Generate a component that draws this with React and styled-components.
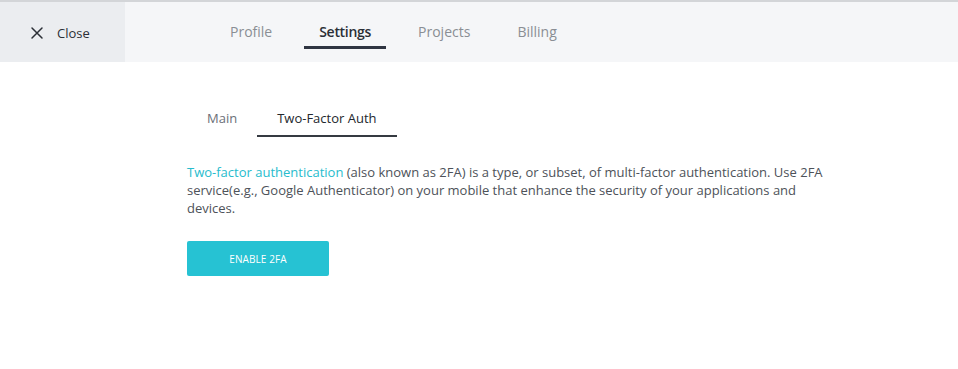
import React from 'react';
import styled, { createGlobalStyle } from 'styled-components';

const GlobalStyle = createGlobalStyle`
  body {
    margin: 0;
    background: #ffffff;
    font-family: 'Open Sans', 'Noto Sans', sans-serif;
  }
`;

const Page = styled.div`
  width: 958px;
  min-height: 369px;
  background: #fff;
`;

const TopBar = styled.header`
  display: flex;
  height: 60px;
  border-top: 2px solid #d3d5d8;
  background: #f5f6f8;
`;

const CloseButton = styled.button`
  display: flex;
  align-items: center;
  gap: 13px;
  width: 125px;
  padding: 2px 0 0 30px;
  border: none;
  background: #ebedf0;
  font-family: inherit;
  font-size: 13px;
  color: #2b2f36;
  cursor: pointer;

  svg {
    width: 14px;
    height: 14px;
  }
`;

const Nav = styled.nav`
  display: flex;
  align-items: flex-start;
  gap: 17px;
  padding-left: 90px;
`;

const NavTab = styled.a`
  display: block;
  height: 47px;
  box-sizing: border-box;
  padding: 20px 15px 0;
  font-size: 14px;
  line-height: 20px;
  font-weight: ${p => (p.active ? 600 : 400)};
  letter-spacing: ${p => (p.active ? '-0.3px' : '0')};
  color: ${p => (p.active ? '#2b2f36' : '#8a8e94')};
  border-bottom: 3px solid ${p => (p.active ? '#2f3542' : 'transparent')};
`;

const Content = styled.main`
  padding: 46px 0 0 187px;
  width: 660px;
`;

const SubTabs = styled.div`
  display: flex;
  margin-bottom: 26px;
`;

const SubTab = styled.a`
  display: block;
  padding: 1px 20px 8px;
  font-size: 13px;
  font-weight: ${p => (p.active ? 500 : 400)};
  color: ${p => (p.active ? '#23272d' : '#6b7078')};
  border-bottom: 2px solid ${p => (p.active ? '#353a41' : 'transparent')};
`;

const Description = styled.p`
  margin: 0 0 24px;
  font-size: 13px;
  line-height: 18px;
  color: #4d5259;
`;

const Link = styled.a`
  color: #27bccd;
  text-decoration: none;
`;

const PrimaryButton = styled.button`
  width: 142px;
  height: 35px;
  border: none;
  border-radius: 2px;
  background: #26c2d3;
  color: #fff;
  font-family: inherit;
  font-size: 10px;
  letter-spacing: 0.1px;
  text-transform: uppercase;
  cursor: pointer;
`;

const tabs = ['Profile', 'Settings', 'Projects', 'Billing'];

export default function App() {
  return (
    <Page>
      <GlobalStyle />
      <TopBar>
        <CloseButton>
          <svg viewBox="0 0 14 14" fill="none" stroke="#2b2f36" strokeWidth="1.5" strokeLinecap="round">
            <path d="M2 2 L12 12 M12 2 L2 12" />
          </svg>
          Close
        </CloseButton>
        <Nav>
          {tabs.map(t => (
            <NavTab key={t} active={t === 'Settings'}>{t}</NavTab>
          ))}
        </Nav>
      </TopBar>

      <Content>
        <SubTabs>
          <SubTab>Main</SubTab>
          <SubTab active>Two-Factor Auth</SubTab>
        </SubTabs>
        <Description>
          <Link href="#">Two-factor authentication</Link> (also known as 2FA) is a type, or subset, of
          multi-factor authentication. Use 2FA service(e.g., Google Authenticator) on your mobile that
          enhance the security of your applications and devices.
        </Description>
        <PrimaryButton>Enable 2FA</PrimaryButton>
      </Content>
    </Page>
  );
}
